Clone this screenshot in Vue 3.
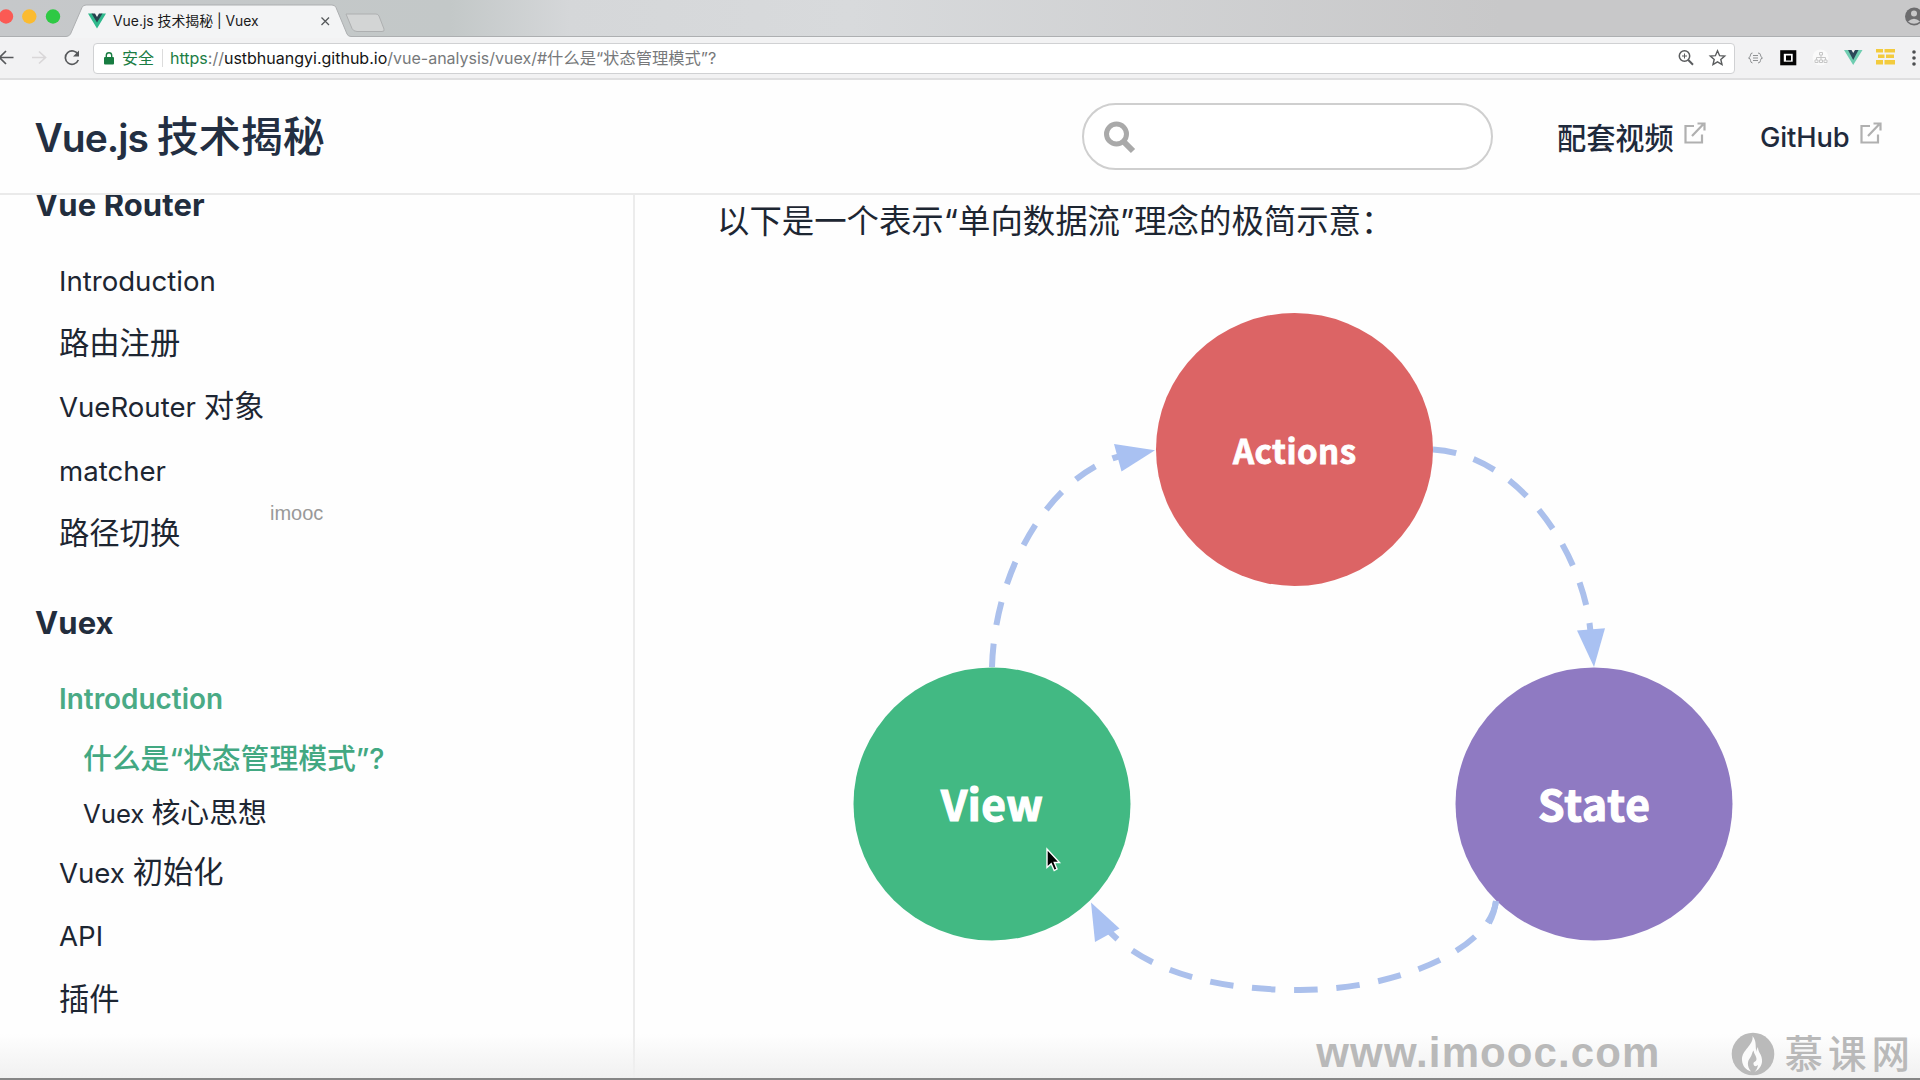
<script setup>
const groups = [
  {
    title: 'Vue Router',
    cls: 'first',
    items: [
      { text: 'Introduction' },
      { text: '路由注册' },
      { text: 'VueRouter 对象' },
      { text: 'matcher' },
      { text: '路径切换' }
    ]
  },
  {
    title: 'Vuex',
    cls: 'second',
    items: [
      { text: 'Introduction', cls: 'active' },
      { text: '什么是“状态管理模式”?', cls: 'sub current' },
      { text: 'Vuex 核心思想', cls: 'sub' },
      { text: 'Vuex 初始化' },
      { text: 'API' },
      { text: '插件' }
    ]
  }
]
const links = ['配套视频', 'GitHub']

// Latin runs are set slightly smaller than the Chinese text beside them.
const runs = (text) =>
  (text.match(/[A-Za-z ]+|[^A-Za-z ]+/g) || []).map((t) => ({ t, latin: /[A-Za-z]/.test(t) }))
</script>

<template>
  <div class="screen">
    <div class="tabs">
      <svg class="tabs-art" width="1920" height="38" viewBox="0 0 1920 38">
        <path d="M346 14H376Q378 14 379 16L384 29Q385 31.500 382 31.500H357Q353.500 31.500 352 28.500Z" fill="#d3d5d5" stroke="#aeb0b1" />
        <path d="M0 36.500H66Q69 36.500 70.500 34L82 7.500Q83 5 86 5H332Q335 5 336 7.500L347 34Q348 36.500 351 36.500H1920V38H0Z" fill="#f3f4f5" stroke="#adafb1" />
        <rect y="37" width="1920" height="1" fill="#f3f4f5" />
        <circle cx="6" cy="16.500" r="7.200" fill="#fb5a54" />
        <circle cx="29.300" cy="16.500" r="7.200" fill="#fbbb30" />
        <circle cx="53" cy="16.500" r="7.200" fill="#2ec944" />
        <path d="M88 13.500H92.500L97 21L101.500 13.500H106L97 28.500Z" fill="#2fb98c" />
        <path d="M91.500 13.500H95L97 17L99 13.500H102.500L97 22.500Z" fill="#27434f" />
        <path d="M321.500 17.500L329 25M329 17.500L321.500 25" stroke="#55585b" stroke-width="1.300" />
        <circle cx="1914" cy="16.500" r="9" fill="#6c6c6e" />
        <circle cx="1914" cy="13.500" r="3" fill="#c8c8c9" />
        <path d="M1908 21.500Q1914 16 1920 21.500Q1914 26 1908 21.500Z" fill="#c8c8c9" />
      </svg>
      <span class="tab-title">Vue.js 技术揭秘 | Vuex</span>
    </div>

    <div class="toolbar">
      <svg class="nav-icons" width="93" height="41" viewBox="0 38 93 41" fill="none">
        <path d="M-2 57.500H13.500M6 51L-.5 57.500L6 64" stroke="#57595b" stroke-width="1.700" />
        <path d="M32 57.500H45.500M39 51.500L45.500 57.500L39 63.500" stroke="#d9d7d8" stroke-width="1.700" />
        <path d="M78 54.500A6.700 6.700 0 1 0 78.300 60" stroke="#57595b" stroke-width="1.700" />
        <path d="M79 50.500V56.500H73Z" fill="#57595b" />
      </svg>
      <div class="address">
        <svg class="lock" width="10" height="13" viewBox="0 0 10 13">
          <path d="M2.300 6V3.500A2.700 2.700 0 0 1 7.700 3.500V6" fill="none" stroke="#187c41" stroke-width="1.400" />
          <rect y="5" width="10" height="7.500" rx="1" fill="#187c41" />
        </svg>
        <span class="secure">安全</span>
        <span class="sep"></span>
        <span class="url"><b class="https">https</b><b class="slashes">://</b><b class="host">ustbhuangyi.github.io</b><b class="path">/vue-analysis/vuex/#</b><b class="hash">什么是“状态管理模式”?</b></span>
        <svg class="address-icons" width="52" height="20" viewBox="1676 48 52 20" fill="none" stroke="#5a5c5e">
          <circle cx="1684.500" cy="56" r="5.200" stroke-width="1.500" />
          <path d="M1688.300 60L1693 64.700" stroke-width="2" />
          <path d="M1682 56H1687M1684.500 53.500V58.500" stroke-width="1" />
          <path d="M1717.500 50.800L1719.600 55.700L1724.700 56.100L1720.800 59.500L1722 64.600L1717.500 61.900L1713 64.600L1714.200 59.500L1710.300 56.100L1715.400 55.700Z" stroke-width="1.400" />
        </svg>
      </div>
      <svg class="extensions" width="186" height="41" viewBox="1735 38 186 41" fill="none">
        <path d="M1752.500 53Q1750.500 53 1750.500 55T1748.500 58Q1750.500 58.300 1750.500 60.500T1752.500 63M1758 53Q1760.500 53 1760.500 55T1762.500 58Q1760.500 58.300 1760.500 60.500T1758 63M1753 55.500H1758M1753 58H1758M1753 60.500H1758" stroke="#8f9193" stroke-width="1" />
        <rect x="1782" y="52" width="12.500" height="11.500" fill="#fff" stroke="#050505" stroke-width="3.600" />
        <rect x="1786" y="55.500" width="5" height="5" fill="#000" />
        <circle cx="1820.500" cy="57.500" r="8" fill="#fafafa" />
        <path d="M1819.500 52.500H1822.500V55H1819.500ZM1821 55V60M1816.500 60V57.500H1825.500V60M1815 60H1818V62.500H1815ZM1819.500 60H1822.500V62.500H1819.500ZM1824 60H1827V62.500H1824Z" stroke="#c6c6c6" />
        <path d="M1844 50H1848.500L1853.200 57.500L1858 50H1862.500L1853.200 65Z" fill="#6fcdb0" />
        <path d="M1848 50H1851.500L1853.200 53L1855 50H1858.500L1853.200 60Z" fill="#2c4859" />
        <path d="M1876 49H1883V52.500H1876ZM1884.500 49H1895V52.500H1884.500ZM1878 54.500H1884.500V58H1878ZM1888 54.500H1894V58H1888ZM1876 60H1883V64.500H1876ZM1884.500 60H1895V64.500H1884.500ZM1886 54.500H1889V58H1886Z" fill="#f3cb3d" />
        <g fill="#4c4e50"><circle cx="1914" cy="52" r="1.800" /><circle cx="1914" cy="58" r="1.800" /><circle cx="1914" cy="64" r="1.800" /></g>
      </svg>
    </div>

    <header class="site-header">
      <h1>Vue.js <span>技术揭秘</span></h1>
      <div class="search">
        <svg width="34" height="34" viewBox="0 0 34 34" fill="none" stroke="#a9a9a9">
          <circle cx="13.500" cy="14" r="10" stroke-width="5" />
          <path d="M21 22L30 31" stroke-width="6" />
        </svg>
      </div>
      <nav>
        <a v-for="(l, i) in links" :key="l" :class="'link' + i">
          <span>{{ l }}</span>
          <svg width="22" height="22" viewBox="0 0 22 22" fill="none" stroke="#b0b0b0" stroke-width="2.200">
            <path d="M10 4H1.500V20.500H18V12.500" />
            <path d="M8 14L19 2.500M13.500 1.500H20.500V8.500" />
          </svg>
        </a>
      </nav>
    </header>

    <div class="body">
      <aside>
        <section v-for="g in groups" :key="g.title" :class="g.cls">
          <h2>{{ g.title }}</h2>
          <ul>
            <li v-for="it in g.items" :key="it.text" :class="it.cls"><span v-for="r in runs(it.text)" :key="r.t" :class="{ latin: r.latin }">{{ r.t }}</span></li>
          </ul>
        </section>
      </aside>
      <main>
        <p>以下是一个表示“单向数据流”理念的极简示意：</p>
        <svg class="flow" width="1285" height="780" viewBox="635 260 1285 780">
          <g fill="none" stroke="#abc0ec" stroke-width="6" stroke-dasharray="23.500 18.800">
            <path d="M992 667C995 560 1060 462 1135 453" />
            <path stroke-dasharray="23.500 18.300" d="M1433 449.500C1520 454 1588 558 1591 640" />
            <path stroke-dasharray="23.500 18.700" d="M1496 901C1490 950 1395 990 1300 990C1200 990 1140 965 1106 928" />
          </g>
          <g fill="#a9c1f2">
            <path d="M1155 450.300L1114 444L1121.500 471.500Z" />
            <path d="M1594 667L1577 630.500L1605 628.300Z" />
            <path d="M1091 902.500L1095 942L1119.500 928.500Z" />
          </g>
          <ellipse cx="1294.500" cy="449.500" rx="138.500" ry="136.500" fill="#dc6465" />
          <ellipse cx="992" cy="804" rx="138.500" ry="136.500" fill="#42b983" />
          <ellipse cx="1594" cy="804" rx="138.500" ry="136.500" fill="#8f7ac2" />
          <path d="M1496 901Q1494.500 913 1489 923" fill="none" stroke="#abc0ec" stroke-width="6" />
          <g class="labels" fill="#fff" stroke="#fff" text-anchor="middle">
            <text x="1294.500" y="464" font-size="33" stroke-width=".8" textLength="123">Actions</text>
            <text x="992" y="821" font-size="42.500" stroke-width="1.200" textLength="102">View</text>
            <text x="1594" y="821" font-size="42.500" stroke-width="1.200" textLength="112">State</text>
          </g>
          <path d="M1047 849V867.500L1051.200 863.700L1054.200 870.500L1057 869L1054.300 862.500H1059.500Z" fill="#000" stroke="#fff" stroke-width="1.400" />
        </svg>
      </main>
    </div>

    <span class="mark-small">imooc</span>
    <div class="mark">
      <span class="mark-url">www.imooc.com</span>
      <svg width="44" height="44" viewBox="0 0 44 44">
        <circle cx="22" cy="22" r="21.300" fill="#bababa" />
        <path d="M21.500 4C23 13 10.500 18 11 28C11.300 34 15 38 20 39.500C15.500 34 16.500 29 19 26C21 23.500 21 20 22.500 18.500C23 22 25.500 24 25.500 27C25.500 30 22 29.500 22.500 32C23 35 25.500 34.500 27 33C26.500 36.500 25 38.500 23.500 40C29 37 32.500 32 30.500 25C29.500 21 27 20 27 15C25.500 17 25.500 18.500 25.500 20C24 15 26 9 21.500 4Z" fill="#fbfbfb" />
      </svg>
      <span class="mark-name">慕课网</span>
    </div>
    <div class="edge"></div>
  </div>
</template>

<style>
body { margin: 0; overflow: hidden; background: #fefefe; }
</style>

<style scoped>
.screen {
  position: relative; width: 1920px; height: 1080px; overflow: hidden;
  display: flex; flex-direction: column; background: #fefefe;
  font-family: Inter, "Noto Sans CJK SC", sans-serif; color: #1d2632;
}
.tabs {
  position: relative; flex: none; height: 38px;
  background: linear-gradient(90deg, #c6c8ca 0, #c3c8c8 450px, #d5d7d9 570px, #d8dadc 850px, #c8c8c9 1500px);
  display: flex; align-items: center;
}
.tabs-art { position: absolute; left: 0; top: 0; }
.tab-title { position: relative; margin-left: 113px; margin-top: 2px; font-size: 13.900px; color: #1a1a1a; white-space: pre; }
.toolbar {
  flex: none; height: 42px; box-sizing: border-box; display: flex; align-items: center;
  background: #f2f2f3; border-bottom: 2px solid #dfdfe0;
}
.nav-icons, .extensions { flex: none; margin-bottom: -1px; }
.address {
  flex: none; width: 1642px; height: 31px; box-sizing: border-box; background: #fff;
  border: 1px solid #d0d1d3; border-radius: 4px; display: flex; align-items: center; padding-left: 10px;
}
.secure { margin: -2px 0 0 8px; font-size: 16px; color: #1b7d44; width: 40px; }
.sep { width: 1px; height: 18px; background: #dcdcdc; margin-right: 7px; }
.url { font-size: 16px; white-space: pre; flex: 1; display: flex; align-items: baseline; margin-top: -2px; }
.url b { font-weight: 400; color: #77797b; }
.url .https { color: #1b7d44; }
.url .host { color: #151515; }
.url .hash { font-size: 16.300px; }
.address-icons { margin-right: 6px; }
.site-header {
  flex: none; height: 115px; box-sizing: border-box; border-bottom: 2px solid #eaeaea;
  display: flex; align-items: center; background: #fefefe; position: relative; z-index: 1;
}
h1 { margin: -6px 0 0 34.500px; width: 1047.500px; font-size: 39px; font-weight: 600; color: #232f42; white-space: pre; letter-spacing: -1px; }
h1 span { font-size: 42px; letter-spacing: 0; font-weight: 500; }
.search { width: 411px; height: 67px; box-sizing: border-box; border: 2px solid #cfcfcf; border-radius: 34px; display: flex; align-items: center; padding-left: 19px; background: #fff; }
nav { display: flex; font-weight: 500; color: #1f2a3c; font-size: 28.500px; padding-top: 1px; }
nav a { display: flex; align-items: center; white-space: pre; }
nav a svg { margin-top: -9px; }
.link0 { margin-left: 64px; width: 203px; }
.link0 span { width: 127px; font-size: 29.200px; margin-top: -3px; }
.link1 span { width: 100px; font-size: 27.300px; letter-spacing: -.1px; margin-top: 1px; }
.body { flex: 1; display: flex; min-height: 0; }
aside { width: 635px; box-sizing: border-box; border-right: 2px solid #ececec; flex: none; }
h2 { margin: 0 0 23.500px 35px; height: 40px; line-height: 40px; font-size: 31px; font-weight: 700; color: #222d3d; letter-spacing: .1px; }
.first h2 { margin-top: -10px; }
.second h2 { margin-top: 37.500px; }
ul { list-style: none; margin: 0; padding: 0 0 0 59px; }
li { height: 63.400px; line-height: 62.400px; font-size: 30.300px; white-space: pre; }
.latin { font-size: 27.600px; }
li.sub { height: 55px; line-height: 53px; padding-left: 24px; font-size: 28.800px; }
.sub .latin { font-size: 25.700px; }
li.active { font-weight: 600; color: #4aaa85; line-height: 64.400px; }
li.active .latin { font-size: 27.900px; }
li.current { font-weight: 500; color: #42a882; height: 56px; line-height: 57px; }
main { flex: 1; display: flex; flex-direction: column; }
p { margin: 0 0 0 82px; height: 65px; line-height: 53px; font-size: 32.400px; white-space: pre; }
.flow { flex: none; display: block; }
.labels { font-family: "Noto Sans CJK SC", sans-serif; font-weight: 700; }
.mark-small { position: absolute; left: 270px; top: 501px; font: 20px/24px "Liberation Sans", sans-serif; color: #999; }
.mark {
  position: absolute; right: 0; bottom: 0; width: 1920px; height: 46px; padding-bottom: 6px; box-sizing: border-box;
  display: flex; align-items: center; justify-content: flex-end; color: #b9b9b9;
  background: linear-gradient(rgba(244,244,244,0), #f0f0f0);
}
.mark-url { font: 700 42px/40px "Liberation Sans", sans-serif; letter-spacing: 1.100px; margin-right: 71px; margin-top: -2px; }
.mark-name { font: 500 38.500px/46px "Noto Sans CJK SC", sans-serif; letter-spacing: 5px; margin: -6px 5px 0 9px; }
.edge { position: absolute; left: 0; right: 0; bottom: 0; height: 2px; background: #868686; }
</style>
